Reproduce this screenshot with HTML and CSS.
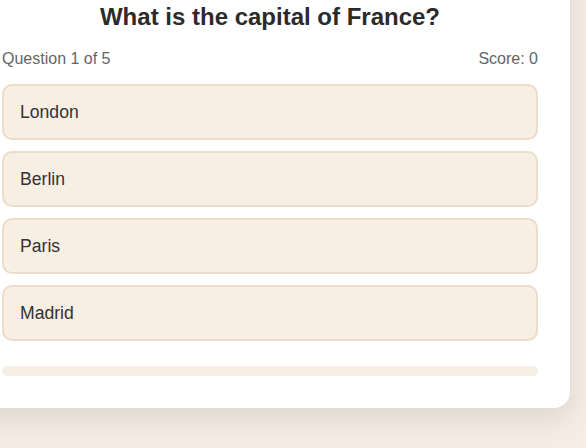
FILE: index.html
```html
<!DOCTYPE html>
<html>
<head>
<meta charset="utf-8">
<link rel="stylesheet" href="styles.css">
</head>
<body>
<div class="card">
  <h2 class="question">What is the capital of France?</h2>
  <div class="meta">
    <span>Question 1 of 5</span>
    <span>Score: 0</span>
  </div>
  <div class="options">
    <button class="option">London</button>
    <button class="option">Berlin</button>
    <button class="option">Paris</button>
    <button class="option">Madrid</button>
  </div>
  <div class="progress"><div class="progress-fill" style="width:0%"></div></div>
</div>
</body>
</html>
```
FILE: styles.css
```css
html, body {
  margin: 0;
  padding: 0;
}
body {
  background: #f5ede4;
  font-family: "Liberation Sans", Arial, sans-serif;
  width: 586px;
  height: 448px;
  overflow: hidden;
}
.card {
  box-sizing: border-box;
  width: 600px;
  margin: -29px 0 0 -30px;
  padding: 32px;
  background: #ffffff;
  border-radius: 16px;
  box-shadow: 0 10px 30px rgba(0, 0, 0, 0.1);
}
.question {
  margin: 0;
  font-size: 24px;
  line-height: 28px;
  font-weight: 700;
  color: #2b2b2b;
  text-align: center;
}
.meta {
  display: flex;
  justify-content: space-between;
  margin: 19px 0 16px;
  font-size: 16px;
  line-height: 18px;
  color: #666666;
}
.options {
  display: flex;
  flex-direction: column;
  gap: 11px;
  margin-bottom: 25px;
}
.option {
  box-sizing: border-box;
  height: 56px;
  padding: 0 16px;
  text-align: left;
  font-family: inherit;
  font-size: 17.6px;
  color: #333333;
  background: #f7eee4;
  border: 2px solid #ecdcc8;
  border-radius: 10px;
}
.progress {
  height: 10px;
  background: #f7eee4;
  border-radius: 5px;
  overflow: hidden;
}
.progress-fill {
  height: 100%;
  background: #d9b98f;
}
```
